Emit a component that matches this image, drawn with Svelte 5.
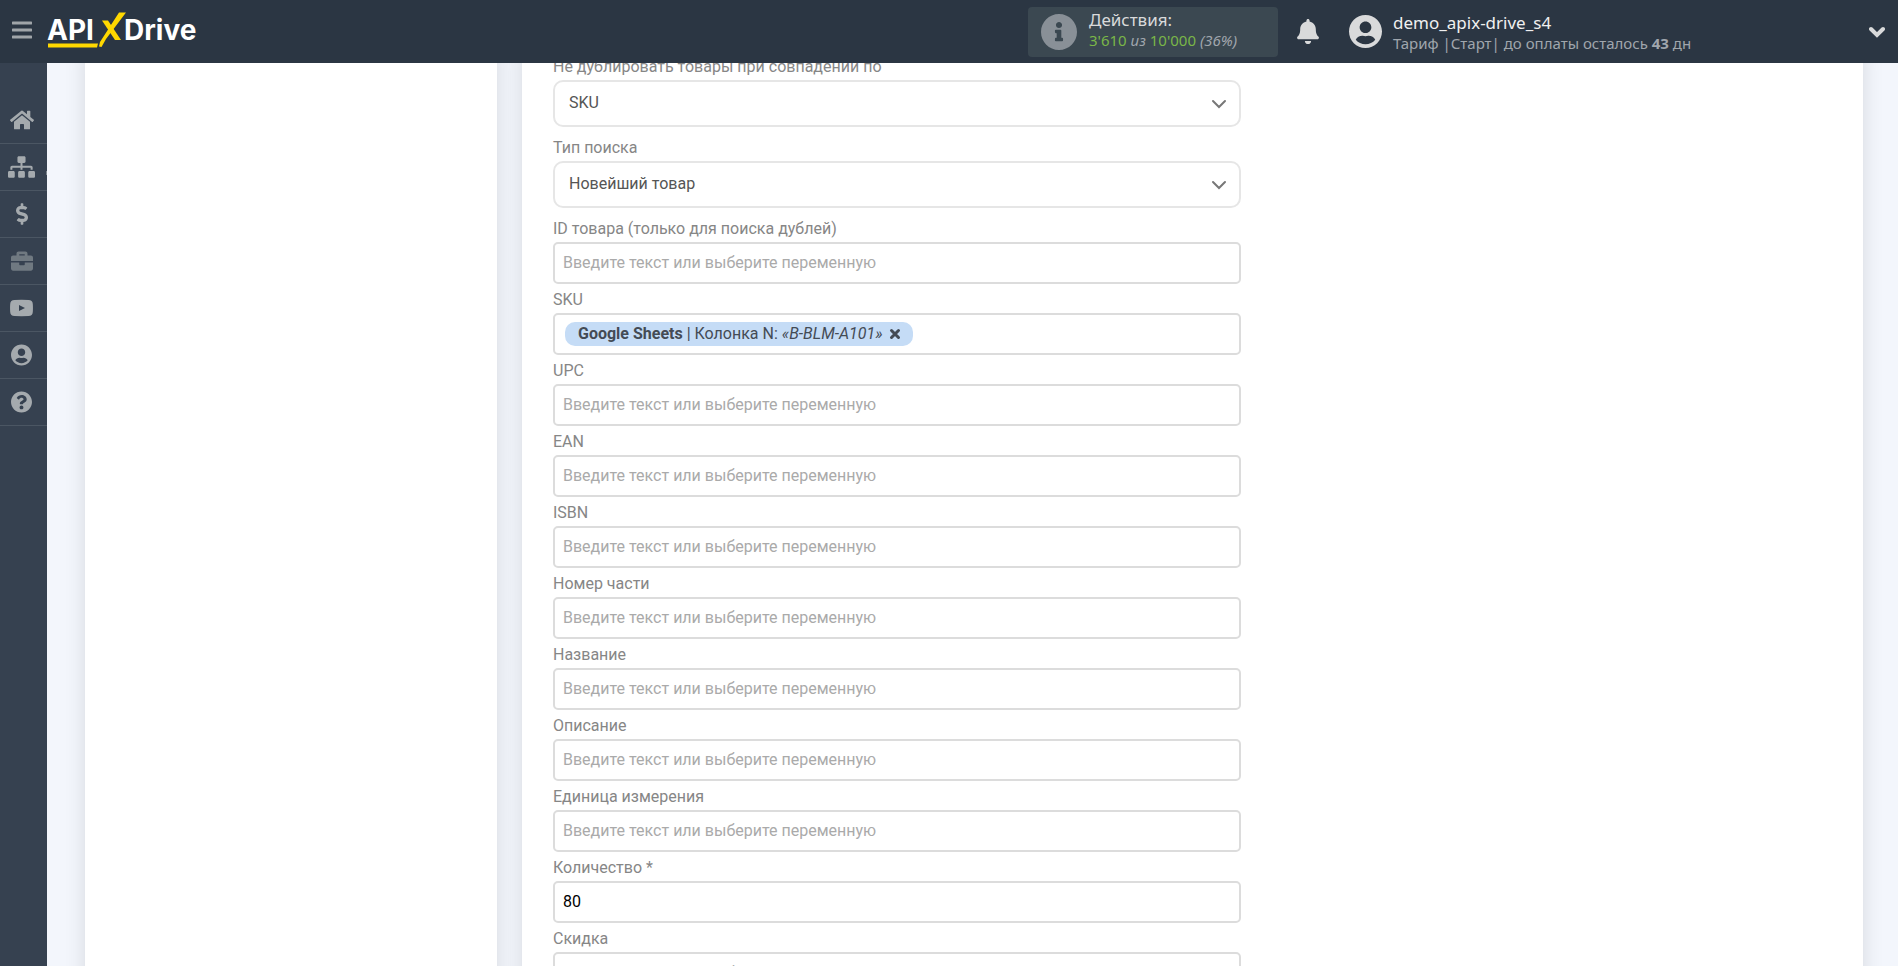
<script>
  const icons = {
    home: {
      box: '0 0 576 512',
      width: 24,
      d: 'M280.37 148.26L96 300.11V464a16 16 0 0 0 16 16l112.06-.29a16 16 0 0 0 15.92-16V368a16 16 0 0 1 16-16h64a16 16 0 0 1 16 16v95.64a16 16 0 0 0 16 16.05L464 480a16 16 0 0 0 16-16V300L295.67 148.26a12.19 12.19 0 0 0-15.3 0zM571.6 251.47L488 182.56V44.05a12 12 0 0 0-12-12h-56a12 12 0 0 0-12 12v72.61L318.47 43a48 48 0 0 0-61 0L4.34 251.47a12 12 0 0 0-1.6 16.9l25.5 31A12 12 0 0 0 45.15 301l235.22-193.74a12.19 12.19 0 0 1 15.3 0L530.9 301a12 12 0 0 0 16.9-1.6l25.5-31a12 12 0 0 0-1.7-16.93z'
    },
    sitemap: {
      box: '0 0 640 512',
      width: 27,
      d: 'M128 352H32c-17.67 0-32 14.33-32 32v96c0 17.67 14.33 32 32 32h96c17.67 0 32-14.33 32-32v-96c0-17.67-14.33-32-32-32zm-24-80h192v48h48v-48h192v48h48v-57.59c0-21.17-17.23-38.41-38.41-38.41H344v-64h40c17.67 0 32-14.33 32-32V32c0-17.67-14.33-32-32-32H256c-17.67 0-32 14.33-32 32v96c0 17.67 14.33 32 32 32h40v64H94.41C73.23 224 56 241.23 56 262.41V320h48v-48zm264 80h-96c-17.67 0-32 14.33-32 32v96c0 17.67 14.33 32 32 32h96c17.67 0 32-14.33 32-32v-96c0-17.67-14.33-32-32-32zm240 0h-96c-17.67 0-32 14.33-32 32v96c0 17.67 14.33 32 32 32h96c17.67 0 32-14.33 32-32v-96c0-17.67-14.33-32-32-32z'
    },
    dollar: {
      box: '0 0 288 512',
      width: 12,
      d: 'M209.2 233.4l-108-31.6C88.7 198.2 80 186.5 80 173.5c0-16.3 13.2-29.5 29.5-29.5h66.3c12.2 0 24.2 3.7 34.2 10.5 6.1 4.1 14.3 3.1 19.5-2l34.8-34c7.1-6.9 6.1-18.4-1.8-24.5C238 74.8 207.4 64.1 176 64V16c0-8.8-7.2-16-16-16h-32c-8.8 0-16 7.2-16 16v48h-2.5C45.8 64-5.4 118.7.5 183.6c4.2 46.1 39.4 83.6 83.8 96.6l102.5 30c12.5 3.7 21.2 15.3 21.2 28.3 0 16.3-13.2 29.5-29.5 29.5h-66.3C100 368 88 364.3 78 357.5c-6.1-4.1-14.3-3.1-19.5 2l-34.8 34c-7.1 6.9-6.1 18.4 1.8 24.5 24.5 19.2 55.1 29.9 86.5 30v48c0 8.8 7.2 16 16 16h32c8.8 0 16-7.2 16-16v-48.2c46.6-.9 90.3-28.6 105.7-72.7 21.5-61.6-14.6-124.8-72.5-141.7z'
    },
    briefcase: {
      box: '0 0 512 512',
      width: 22,
      d: 'M320 336c0 8.84-7.16 16-16 16h-96c-8.84 0-16-7.16-16-16v-48H0v144c0 25.6 22.4 48 48 48h416c25.6 0 48-22.4 48-48V288H320v48zm144-208h-80V80c0-25.6-22.4-48-48-48H176c-25.6 0-48 22.4-48 48v48H48c-25.6 0-48 22.4-48 48v80h512v-80c0-25.6-22.4-48-48-48zm-144 0H192V96h128v32z'
    },
    video: {
      box: '0 0 23 22',
      width: 23,
      d: 'M4.5 3Q11.5 2.6 18.5 3Q22.6 3.200 22.800 7Q23.100 11 22.800 15Q22.600 18.800 18.500 19Q11.500 19.300 4.500 19Q.4 18.800.2 15Q-.1 11 .2 7Q.4 3.200 4.500 3zM9 8v6l6-3z'
    },
    user: {
      box: '0 0 496 512',
      width: 21,
      d: 'M248 8C111 8 0 119 0 256s111 248 248 248 248-111 248-248S385 8 248 8zm0 96c48.6 0 88 39.4 88 88s-39.4 88-88 88-88-39.4-88-88 39.4-88 88-88zm0 344c-58.7 0-111.3-26.6-146.5-68.2 18.8-35.4 55.6-59.8 98.5-59.8 2.4 0 4.8.4 7.1 1.1 13 4.2 26.6 6.9 40.9 6.9 14.3 0 28-2.7 40.9-6.9 2.3-.7 4.7-1.1 7.1-1.1 42.9 0 79.7 24.4 98.5 59.8C359.3 421.4 306.7 448 248 448z'
    },
    question: {
      box: '8 0 496 512',
      width: 21,
      d: 'M504 256c0 136.997-111.043 248-248 248S8 392.997 8 256C8 119.083 119.043 8 256 8s248 111.083 248 248zM262.655 90c-54.497 0-89.255 22.957-116.549 63.758-3.536 5.286-2.353 12.415 2.715 16.258l34.699 26.31c5.205 3.947 12.621 3.008 16.665-2.122 17.864-22.658 30.113-35.797 57.303-35.797 20.429 0 45.698 13.148 45.698 32.958 0 14.976-12.363 22.667-32.534 33.976C247.128 238.528 216 254.941 216 296v4c0 6.627 5.373 12 12 12h56c6.627 0 12-5.373 12-12v-1.333c0-28.462 83.186-29.647 83.186-106.667 0-58.002-60.165-102-116.531-102zM256 338c-25.365 0-46 20.635-46 46 0 25.364 20.635 46 46 46s46-20.636 46-46c0-25.365-20.635-46-46-46z'
    }
  };

  const menu = [
    { icon: 'home' },
    { icon: 'sitemap', marked: true },
    { icon: 'dollar' },
    { icon: 'briefcase', dim: true },
    { icon: 'video' },
    { icon: 'user' },
    { icon: 'question' }
  ];

  const selects = [
    { id: 'match', label: 'Не дублировать товары при совпадении по', value: 'SKU' },
    { id: 'search', label: 'Тип поиска', value: 'Новейший товар' }
  ];

  const fields = [
    { id: 'product-id', label: 'ID товара (только для поиска дублей)' },
    { id: 'sku', label: 'SKU', chip: true },
    { id: 'upc', label: 'UPC' },
    { id: 'ean', label: 'EAN' },
    { id: 'isbn', label: 'ISBN' },
    { id: 'part', label: 'Номер части' },
    { id: 'name', label: 'Название' },
    { id: 'description', label: 'Описание' },
    { id: 'unit', label: 'Единица измерения' },
    { id: 'quantity', label: 'Количество *', value: '80' },
    { id: 'discount', label: 'Скидка' }
  ];

  const hint = 'Введите текст или выберите переменную';
</script>

<div class="shell">
  <header>
    <button class="burger">
      <svg width="20" height="18" viewBox="0 0 20 18"><path d="M1 2h18M1 9h18M1 16h18" stroke="currentColor" stroke-width="3" stroke-linecap="round" /></svg>
    </button>
    <a class="logo" href="#home">
      <svg width="156" height="40" viewBox="0 0 156 40">
        <text x="0" y="30">API</text>
        <text x="77" y="30">Drive</text>
        <path d="M1 33.500H51L50 37.500H1zM72 2.500H79L59 29L54.500 37L52 36.500L53 32z" fill="#ffd800" />
        <path d="M55 10.500H61L74 30H68z" fill="#ffd800" />
      </svg>
    </a>
    <div class="usage">
      <svg width="36" height="36" viewBox="8 8 496 496"><path fill="currentColor" d="M256 8C119.043 8 8 119.083 8 256c0 136.997 111.043 248 248 248s248-111.003 248-248C504 119.083 392.957 8 256 8zm0 110c23.196 0 42 18.804 42 42s-18.804 42-42 42-42-18.804-42-42 18.804-42 42-42zm56 254c0 6.627-5.373 12-12 12h-88c-6.627 0-12-5.373-12-12v-24c0-6.627 5.373-12 12-12h12v-64h-12c-6.627 0-12-5.373-12-12v-24c0-6.627 5.373-12 12-12h64c6.627 0 12 5.373 12 12v100h12c6.627 0 12 5.373 12 12v24z" /></svg>
      <div class="count">
        <div class="title">Действия:</div>
        <div class="detail"><b>3'610</b> <i>из</i> <b>10'000</b> <i>(36%)</i></div>
      </div>
    </div>
    <button class="bell">
      <svg width="22" height="25" viewBox="0 0 448 512"><path fill="currentColor" d="M224 512c35.32 0 63.97-28.65 63.97-64H160.03c0 35.35 28.65 64 63.97 64zm215.39-149.71c-19.32-20.76-55.47-51.99-55.47-154.29 0-77.7-54.48-139.9-127.94-155.16V32c0-17.67-14.32-32-31.98-32s-31.98 14.33-31.98 32v20.84C118.56 68.1 64.08 130.3 64.08 208c0 102.3-36.15 133.53-55.47 154.29-6 6.45-8.66 14.16-8.61 21.71.11 16.4 12.98 32 32.1 32h383.8c19.12 0 32-15.6 32.1-32 .05-7.55-2.61-15.27-8.61-21.71z" /></svg>
    </button>
    <button class="account">
      <svg class="avatar" width="33" height="33" viewBox="0 8 496 496"><path fill="currentColor" d={icons.user.d} /></svg>
      <span class="who">
        <span class="title">demo_apix-drive_s4</span>
        <span class="detail">Тариф |Старт| до оплаты осталось <strong>43</strong> дн</span>
      </span>
      <svg class="more" width="16" height="12" viewBox="0 0 16 12"><path d="M2 3l6 6 6-6" fill="none" stroke="currentColor" stroke-width="4" stroke-linecap="round" /></svg>
    </button>
  </header>

  <div class="body">
    <nav>
      {#each menu as item}
        {@const icon = icons[item.icon]}
        <a href={'#' + item.icon} class:dim={item.dim} class:marked={item.marked}>
          <svg width={icon.width} height="22" viewBox={icon.box}><path fill="currentColor" fill-rule="evenodd" d={icon.d} /></svg>
        </a>
      {/each}
    </nav>

    <main>
      <aside class="card"></aside>
      <section class="card">
        <form>
          {#each selects as s}
            <div class="field wide">
              <label for={s.id}>{s.label}</label>
              <div class="pick">
                <select id={s.id}><option>{s.value}</option></select>
                <svg width="16" height="10" viewBox="0 0 16 10"><path d="M2 2l6 6 6-6" fill="none" stroke="#777" stroke-width="2" stroke-linecap="round" /></svg>
              </div>
            </div>
          {/each}
          {#each fields as f}
            <div class="field">
              <label for={f.id}>{f.label}</label>
              <div class="box">
                {#if f.chip}
                  <span class="chip">
                    <span><strong>Google Sheets</strong> | Колонка N: <em>«B-BLM-A101»</em></span>
                    <button type="button">
                      <svg width="12" height="12" viewBox="0 0 12 12"><path d="M2.500 2.500l7 7M9.500 2.500l-7 7" stroke="currentColor" stroke-width="3" stroke-linecap="round" /></svg>
                    </button>
                  </span>
                {/if}
                <input id={f.id} type="text" value={f.value ?? ''} placeholder={f.chip ? '' : hint} />
              </div>
            </div>
          {/each}
        </form>
      </section>
    </main>
  </div>
</div>

<style>
  :global(body) {
    margin: 0;
  }

  .shell {
    display: flex;
    flex-direction: column;
    height: 100vh;
    overflow: hidden;
    background: #f3f6fc;
    font: 16px/24px Roboto, sans-serif;
  }

  button {
    padding: 0;
    border: 0;
    background: none;
    color: inherit;
    font: inherit;
    cursor: pointer;
  }

  svg {
    display: block;
    flex: none;
  }

  header {
    display: flex;
    flex: none;
    align-items: center;
    box-sizing: border-box;
    height: 63px;
    padding: 0 13px 0 12px;
    background: #2b3643;
    color: #d9dadb;
    font-family: "Noto Sans", sans-serif;
    z-index: 2;
  }

  .burger {
    padding-bottom: 3px;
    color: #a0a5a9;
  }

  .logo {
    margin: 0 auto 0 15px;
    padding-bottom: 4px;
  }

  .logo text {
    fill: #fff;
    font: 700 28px Inter, sans-serif;
  }

  .usage {
    display: flex;
    align-items: center;
    gap: 12px;
    box-sizing: border-box;
    width: 250px;
    height: 50px;
    margin-right: 19px;
    padding: 0 13px;
    border-radius: 4px;
    background: #3b4851;
  }

  .usage > svg {
    color: #899097;
  }

  .count {
    padding-bottom: 4px;
  }

  .title {
    font-size: 17px;
    line-height: 21px;
  }

  .detail {
    color: #a0a6ad;
    font-size: 15px;
    line-height: 20px;
  }

  .usage b {
    color: #7ab648;
    font-weight: 400;
  }

  .bell {
    margin-right: 30px;
  }

  .account {
    display: flex;
    align-items: center;
    flex: 0 0 536px;
    text-align: left;
  }

  .who {
    display: flex;
    flex-direction: column;
    flex: 1;
    padding: 2px 0 0 11px;
  }

  .who .title {
    color: #f0f0f0;
  }

  .body {
    display: flex;
    flex: 1;
    min-height: 0;
  }

  nav {
    flex: none;
    box-sizing: border-box;
    width: 47px;
    padding-top: 34px;
    background: #364150;
    z-index: 1;
  }

  nav a {
    position: relative;
    display: flex;
    align-items: center;
    justify-content: center;
    box-sizing: border-box;
    height: 47px;
    padding: 0 4px 1px 0;
    border-bottom: 1px solid #4b5663;
    color: #a5aaae;
  }

  nav .dim {
    color: #707981;
  }

  nav .marked::after {
    content: '';
    position: absolute;
    right: 0;
    top: 27px;
    width: 1px;
    height: 4px;
    background: #7d858d;
  }

  main {
    display: grid;
    grid-template-columns: 412fr 1341fr;
    gap: 25px;
    flex: 1;
    margin-top: -12px;
    padding: 0 35px 0 38px;
  }

  .card {
    background: #fff;
    box-shadow: 0 0 20px rgba(0, 0, 0, 0.12);
  }

  form {
    max-width: 688px;
    padding: 0 31px;
  }

  .wide {
    padding-bottom: 5px;
  }

  label {
    display: block;
    padding-top: 2px;
    color: #868686;
    line-height: 27px;
  }

  .pick {
    display: grid;
    align-items: center;
  }

  .pick > * {
    grid-area: 1 / 1;
  }

  .pick svg {
    justify-self: end;
    margin-right: 14px;
    pointer-events: none;
  }

  select {
    appearance: none;
    width: 100%;
    height: 47px;
    padding: 0 40px 2px 14px;
    border: 2px solid #e6e6e6;
    border-radius: 10px;
    background: #fff;
    color: #555;
    font: inherit;
  }

  .box {
    display: flex;
    align-items: center;
    box-sizing: border-box;
    height: 42px;
    padding: 0 8px;
    border: 2px solid #dcdcdc;
    border-radius: 5px;
  }

  input {
    flex: 1;
    min-width: 0;
    padding: 0;
    border: 0;
    outline: 0;
    background: none;
    color: #000;
    font: inherit;
  }

  input::placeholder {
    color: #aaa;
  }

  .chip {
    display: flex;
    align-items: center;
    gap: 6px;
    height: 24px;
    margin-left: 2px;
    padding: 0 12px 0 13px;
    border-radius: 10px;
    background: #c5dcf6;
    color: #444b55;
  }
</style>
